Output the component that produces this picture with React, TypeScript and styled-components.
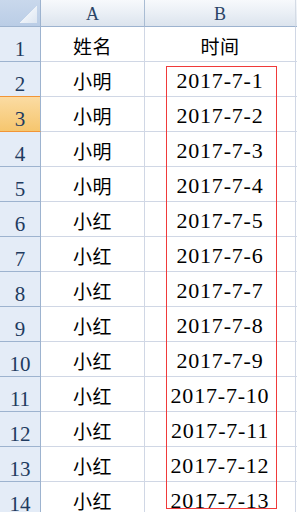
import React from "react";
import styled, { createGlobalStyle } from "styled-components";

const Global = createGlobalStyle`
  html, body { margin: 0; padding: 0; background: #ffffff; }
  body { overflow: hidden; }
  #root { width: 297px; height: 512px; overflow: hidden; }
`;

const Sheet = styled.div`
  position: relative;
  width: 297px;
  height: 512px;
  overflow: hidden;
  display: grid;
  grid-template-columns: 41px 104px 151px 1fr;
  grid-auto-rows: 35px;
  grid-template-rows: 27px;
  font-family: "Liberation Serif", "Noto Sans CJK SC", serif;
`;

const Corner = styled.div`
  position: relative;
  box-sizing: border-box;
  background: linear-gradient(#c9d8ec, #bacde6);
  border-right: 1px solid #9db3cf;
  border-bottom: 1px solid #9db3cf;
`;

const CornerTriangle = styled.div`
  position: absolute;
  right: 3px;
  bottom: 3px;
  width: 19px;
  height: 17px;
  background: linear-gradient(135deg, transparent 50%, #eef3f9 50%, #dde6f1 100%);
`;

const ColHeader = styled.div`
  box-sizing: border-box;
  display: flex;
  align-items: center;
  justify-content: center;
  background: linear-gradient(#f7f9fc 0%, #eaeff5 50%, #dce4ee 100%);
  border-right: 1px solid ${(p: { $last?: boolean }) => (p.$last ? "#d4dbe5" : "#a9bcd3")};
  border-bottom: 1px solid #9db3cf;
  color: #2a4466;
  font-family: "Liberation Serif", serif;
  font-size: 18px;
  padding-top: 2px;
`;

const RowHeader = styled.div<{ $active?: boolean }>`
  box-sizing: border-box;
  display: flex;
  align-items: flex-end;
  justify-content: center;
  padding-bottom: 1px;
  background: ${(p) => (p.$active ? "linear-gradient(#fbdca4, #f6c66e)" : "#e4ecf7")};
  border-right: 1px solid #9db3cf;
  border-bottom: 1px solid ${(p) => (p.$active ? "#f29536" : "#9db3cf")};
  box-shadow: ${(p) => (p.$active ? "inset 0 1px 0 #f29536" : "none")};
  margin-top: ${(p) => (p.$active ? "-1px" : "0")};
  height: ${(p) => (p.$active ? "36px" : "auto")};
  color: #1f3b60;
  font-family: "Liberation Serif", serif;
  font-size: 21px;
  line-height: 22px;
`;

const Cell = styled.div<{ $mono?: boolean }>`
  box-sizing: border-box;
  display: flex;
  align-items: center;
  justify-content: center;
  padding-top: 3px;
  border-right: 1px solid #d0d7e5;
  border-bottom: 1px solid #d0d7e5;
  color: #000;
  font-family: ${(p) => (p.$mono ? '"Liberation Serif", serif' : '"Noto Sans CJK SC", sans-serif')};
  font-size: ${(p) => (p.$mono ? "22px" : "19px")};
  letter-spacing: ${(p) => (p.$mono ? "0.8px" : "0.5px")};
  white-space: nowrap;
`;

const Filler = styled.div`
  box-sizing: border-box;
  border-bottom: 1px solid #d0d7e5;
`;

const HeaderFiller = styled.div`
  box-sizing: border-box;
  background: linear-gradient(#f7f9fc 0%, #eaeff5 50%, #dce4ee 100%);
  border-bottom: 1px solid #9db3cf;
`;

const RedBox = styled.div`
  position: absolute;
  left: 166px;
  top: 66px;
  width: 111px;
  height: 443px;
  box-sizing: border-box;
  border: 1px solid #f03a3a;
  pointer-events: none;
`;

const rows: [string, string][] = [
  ["姓名", "时间"],
  ["小明", "2017-7-1"],
  ["小明", "2017-7-2"],
  ["小明", "2017-7-3"],
  ["小明", "2017-7-4"],
  ["小红", "2017-7-5"],
  ["小红", "2017-7-6"],
  ["小红", "2017-7-7"],
  ["小红", "2017-7-8"],
  ["小红", "2017-7-9"],
  ["小红", "2017-7-10"],
  ["小红", "2017-7-11"],
  ["小红", "2017-7-12"],
  ["小红", "2017-7-13"],
];

export default function App() {
  return (
    <>
      <Global />
      <Sheet>
        <Corner>
          <CornerTriangle />
        </Corner>
        <ColHeader>A</ColHeader>
        <ColHeader $last>B</ColHeader>
        <HeaderFiller />
        {rows.map(([a, b], i) => (
          <React.Fragment key={i}>
            <RowHeader $active={i === 2}>{i + 1}</RowHeader>
            <Cell>{a}</Cell>
            <Cell $mono={i > 0}>{b}</Cell>
            <Filler />
          </React.Fragment>
        ))}
        <RedBox />
      </Sheet>
    </>
  );
}
